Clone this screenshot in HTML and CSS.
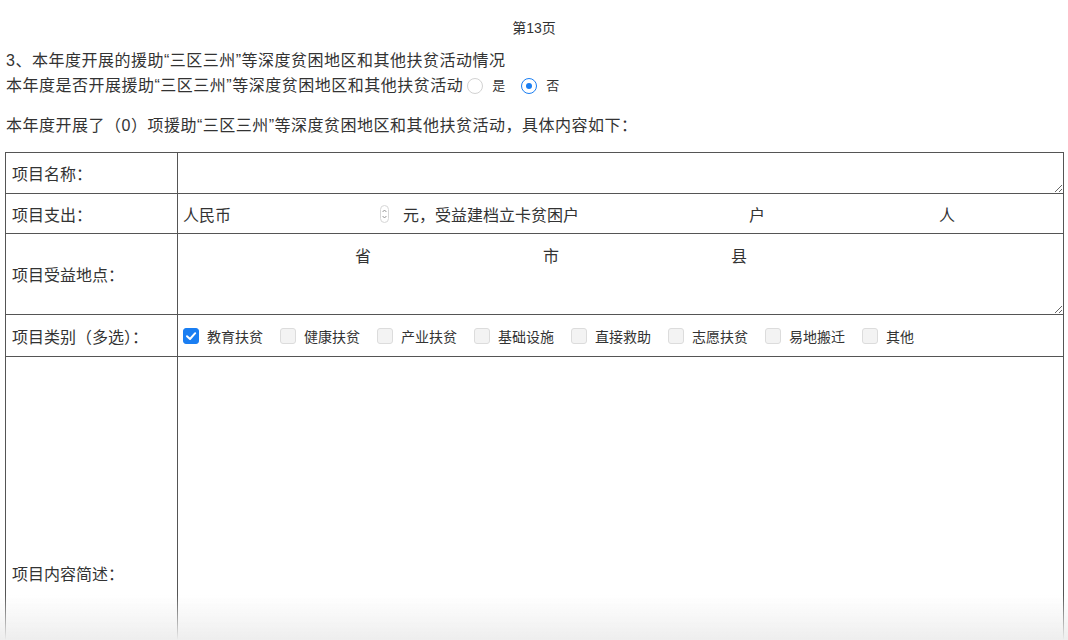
FILE: index.html
```html
<!DOCTYPE html>
<html lang="zh-CN">
<head>
<meta charset="utf-8">
<title>第13页</title>
<link rel="stylesheet" href="styles.css">
</head>
<body>
<div class="page">
  <div class="page-no">第13页</div>
  <div class="q-title">3、本年度开展的援助“三区三州”等深度贫困地区和其他扶贫活动情况</div>
  <div class="q-line">
    <span class="q-text">本年度是否开展援助“三区三州”等深度贫困地区和其他扶贫活动</span>
    <span class="radio"></span><span class="radio-label">是</span>
    <span class="radio checked"></span><span class="radio-label">否</span>
  </div>
  <div class="q-summary">本年度开展了（0）项援助“三区三州”等深度贫困地区和其他扶贫活动，具体内容如下：</div>

  <table class="form">
    <colgroup><col class="c-label"><col class="c-field"></colgroup>
    <tr class="r-name">
      <th>项目名称：</th>
      <td class="flush"><textarea class="ta ta-name"></textarea></td>
    </tr>
    <tr class="r-cost">
      <th>项目支出：</th>
      <td>
        <div class="inline-row">
          <span>人民币</span>
          <span class="num-field"><input class="blank w-money" type="text"><span class="spin"><svg width="9" height="18" viewBox="0 0 9 18"><rect x="0.5" y="0.5" width="8" height="17" rx="4" fill="#fff" stroke="#d6d6d6"/><path d="M2.6 7 L4.5 5 L6.4 7" fill="none" stroke="#8a8a8a" stroke-width="0.9"/><path d="M2.6 11 L4.5 13 L6.4 11" fill="none" stroke="#8a8a8a" stroke-width="0.9"/></svg></span></span>
          <span class="after-spin">元，受益建档立卡贫困户</span>
          <input class="blank w-hh" type="text">
          <span>户</span>
          <input class="blank w-pp" type="text">
          <span>人</span>
        </div>
      </td>
    </tr>
    <tr class="r-place">
      <th>项目受益地点：</th>
      <td class="flush">
        <div class="inline-row place-row">
          <input class="blank w-place first" type="text"><span>省</span>
          <input class="blank w-place" type="text"><span>市</span>
          <input class="blank w-place" type="text"><span>县</span>
        </div>
        <textarea class="ta ta-place"></textarea>
      </td>
    </tr>
    <tr class="r-type">
      <th>项目类别（多选）：</th>
      <td>
        <div class="checks">
          <label class="chk"><span class="box on"><svg width="16" height="16" viewBox="0 0 16 16"><path d="M4 8.2 L7 11 L12.2 5.2" fill="none" stroke="#fff" stroke-width="2" stroke-linecap="round" stroke-linejoin="round"/></svg></span>教育扶贫</label>
          <label class="chk"><span class="box"></span>健康扶贫</label>
          <label class="chk"><span class="box"></span>产业扶贫</label>
          <label class="chk"><span class="box"></span>基础设施</label>
          <label class="chk"><span class="box"></span>直接救助</label>
          <label class="chk"><span class="box"></span>志愿扶贫</label>
          <label class="chk"><span class="box"></span>易地搬迁</label>
          <label class="chk"><span class="box"></span>其他</label>
        </div>
      </td>
    </tr>
    <tr class="r-desc">
      <th>项目内容简述：</th>
      <td class="flush"><textarea class="ta ta-desc"></textarea></td>
    </tr>
  </table>
</div>
<div class="fade"></div>
</body>
</html>
```

FILE: styles.css
```css
html, body {
  margin: 0;
  padding: 0;
  background: #fff;
}
body {
  font-family: "Liberation Sans", "Noto Sans CJK SC", sans-serif;
  color: #333;
  font-size: 16px;
}
.page {
  padding: 0 5px;
}
.page-no {
  text-align: center;
  font-size: 14px;
  line-height: 20px;
  padding-top: 18px;
  margin-bottom: 12px;
}
.q-title, .q-text, .q-summary {
  letter-spacing: 0.5px;
}
.q-title {
  line-height: 22px;
  padding-left: 1px;
  margin-bottom: 3px;
}
.q-line {
  display: flex;
  align-items: center;
  line-height: 22px;
  padding-left: 1px;
}
.radio {
  width: 16px;
  height: 16px;
  border-radius: 50%;
  border: 1px solid #d2d2d2;
  box-sizing: border-box;
  background: #fff;
  margin-left: 4px;
  display: inline-block;
  position: relative;
  flex: none;
}
.radio.checked {
  border: 1.5px solid #1a7ef2;
  margin-left: 16px;
}
.radio.checked::after {
  content: "";
  position: absolute;
  left: 3.5px;
  top: 3.5px;
  width: 6px;
  height: 6px;
  border-radius: 50%;
  background: #1a7ef2;
}
.radio-label {
  font-size: 13px;
  margin-left: 9px;
}
.q-summary {
  line-height: 22px;
  padding-left: 1px;
  margin-top: 18px;
  margin-bottom: 15px;
}
.form {
  width: 1059px;
  border-collapse: collapse;
  table-layout: fixed;
  font-size: 16px;
}
.c-label { width: 172px; }
.form th, .form td {
  border: 1px solid #555;
  padding: 0;
}
.form th {
  text-align: left;
  font-weight: normal;
  padding-left: 6px;
  vertical-align: middle;
}
.form td {
  padding: 0 5px;
  vertical-align: middle;
}
.form td.flush {
  padding: 0;
  vertical-align: top;
}
.r-name th, .r-name td { height: 40px; }
.r-cost th, .r-cost td { height: 39px; }
.r-place th, .r-place td { height: 80px; }
.r-type th, .r-type td { height: 41px; }
.r-desc th, .r-desc td { height: 432px; }

.ta {
  display: block;
  width: 100%;
  box-sizing: border-box;
  border: none;
  outline: none;
  margin: 0;
  padding: 2px 4px;
  font: inherit;
  background: transparent;
}
.ta-name { height: 40px; }
.ta-place { height: 38px; }
.ta-desc { height: 430px; resize: vertical; }

.inline-row {
  display: flex;
  align-items: center;
  white-space: nowrap;
}
.blank {
  border: none;
  outline: none;
  background: transparent;
  font: inherit;
  padding: 0;
  margin: 0;
  height: 22px;
  flex: none;
}
.num-field {
  display: inline-flex;
  align-items: center;
}
.w-money { width: 149px; }
.spin {
  display: inline-flex;
}
.after-spin { margin-left: 14px; }
.w-hh { width: 170px; }
.w-pp { width: 174px; }
.place-row {
  height: 42px;
  align-items: flex-start;
  padding-top: 12px;
  box-sizing: border-box;
}
.place-row span { line-height: 22px; }
.w-place { width: 172px; }
.w-place.first { width: 177px; }

.checks {
  display: flex;
  align-items: center;
  font-size: 14px;
}
.chk {
  display: inline-flex;
  align-items: center;
  width: 97px;
  flex: none;
}
.box {
  width: 16px;
  height: 16px;
  box-sizing: border-box;
  border: 1px solid #dcdcdc;
  border-radius: 3px;
  background: #f3f3f3;
  margin-right: 8px;
  display: inline-block;
}
.box.on {
  background: #1a7ef2;
  border-color: #1a7ef2;
}
.box svg { display: block; margin: -1px; }

.fade {
  position: fixed;
  left: 0;
  right: 0;
  bottom: 0;
  height: 45px;
  background: linear-gradient(to bottom, rgba(240,240,240,0), rgba(238,238,238,1));
  pointer-events: none;
}
```
